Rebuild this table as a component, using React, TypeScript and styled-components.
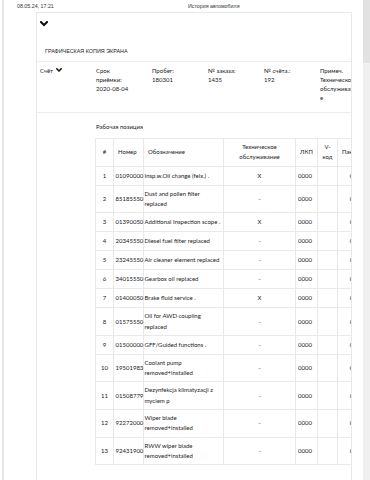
import React from 'react';
import styled, { createGlobalStyle } from 'styled-components';

const GlobalStyle = createGlobalStyle`
  html, body {
    margin: 0;
    padding: 0;
    background: #fff;
  }
  body {
    font-family: "Lato", "Open Sans", sans-serif;
    color: #222;
  }
`

const Page = styled.div`
  display: flex;
  width: 370px;
  height: 480px;
  overflow: hidden;
  padding-left: 2px;
  box-sizing: border-box;
`

const Frame = styled.div`
  flex: 1;
  min-width: 0;
  display: flex;
  flex-direction: column;
  border-left: 2px solid #e6e6e6;
`

// колонтитул печати
const PrintHeader = styled.div`
  display: grid;
  grid-template-columns: 171px auto;
  align-items: center;
  height: 12px;
  padding-left: 13px;
  font-family: "Liberation Sans", Arial, sans-serif;
  font-size: 5.3px;
  color: #333;
`

const Card = styled.div`
  flex: 1;
  width: 316px;
  margin-left: 32px;
  box-sizing: border-box;
  border: 1px solid #e8e8e8;
  border-bottom: none;
  overflow: hidden;
`

const Toggle = styled.div`
  display: flex;
  padding: 8px 0 0 3px;
  height: 5px;
`

const Title = styled.div`
  padding: 21px 0 6px 8px;
  line-height: 8px;
  font-family: "Liberation Sans", Arial, sans-serif;
  font-size: 5.4px;
  text-transform: uppercase;
  color: #222;
`

const InfoRow = styled.div`
  display: grid;
  grid-template-columns: repeat(5, 36px) 37.5px;
  column-gap: 20px;
  padding: 3.5px 3px 9px;
  border-top: 1px solid #ececec;
  border-bottom: 1px solid #ececec;
  font-size: 6px;
  line-height: 9.3px;
`

const InfoCell = styled.div`
  overflow-wrap: anywhere;
  white-space: normal;
`

const Label = styled.span`
  display: inline-flex;
  align-items: center;
  gap: 3px;
`

const WorkSection = styled.div`
  padding: 9px 0 8px 58px;
`

const SectionTitle = styled.div`
  padding-left: 1px;
  margin-bottom: 7px;
  font-size: 6px;
  line-height: 9px;
`

const Table = styled.table`
  width: 270px;
  table-layout: fixed;
  border-collapse: collapse;
  font-family: "Lato", sans-serif;
  font-size: 6px;
  color: #222;
`

const Col = styled.col<{ $w: number }>`
  width: ${p => p.$w}px;
`

const Th = styled.th<{ $align?: string }>`
  padding: 3.8px 4px;
  border: 1px solid #e9e9e9;
  font-weight: 400;
  line-height: 9.7px;
  text-align: ${p => p.$align || 'left'};
  vertical-align: middle;
  white-space: normal;
`

const Td = styled.td<{ $align?: string; $pad?: number }>`
  padding: 4px ${p => p.$pad ?? 1.5}px;
  border: 1px solid #e9e9e9;
  line-height: 10px;
  text-align: ${p => p.$align || 'left'};
  vertical-align: middle;
  white-space: nowrap;
`

const Name = styled(Td)`
  padding: 3px 0 3px 0.5px;
  line-height: 10.3px;
  overflow: hidden;
`

const ScrollTrack = styled.div`
  width: 7px;
  background: #f0f0f0;
  display: flex;
  flex-direction: column;
`

const ScrollThumb = styled.div`
  height: 63px;
  background: #e2e2e2;
`

const Chevron = ({ w, h }: { w: number, h: number }) => (
  <svg width={w} height={h} viewBox="0 0 8 5.5">
    <path d="M1 1 L4 4 L7 1" fill="none" stroke="#111" strokeWidth="2" strokeLinecap="square" />
  </svg>
)

interface IRow {
  code: string,
  name: string[],
  service: string
}

const rows: IRow[] = [
  { code: '01090000', name: ['Insp.w.Oil change (felx.) .'], service: 'X' },
  { code: '85185550', name: ['Dust and pollen filter', 'replaced'], service: '-' },
  { code: '01390050', name: ['Additional Inspection scope .'], service: 'X' },
  { code: '20345550', name: ['Diesel fuel filter replaced'], service: '-' },
  { code: '23245550', name: ['Air cleaner element replaced'], service: '-' },
  { code: '34015550', name: ['Gearbox oil replaced'], service: '-' },
  { code: '01400050', name: ['Brake fluid service .'], service: 'X' },
  { code: '01575550', name: ['Oil for AWD coupling', 'replaced'], service: '-' },
  { code: '01500000', name: ['GFF/Guided functions .'], service: '-' },
  { code: '19501983', name: ['Coolant pump', 'removed+installed'], service: '-' },
  { code: '01508779', name: ['Dezynfekcja klimatyzacji z', 'myciem p'], service: '-' },
  { code: '92272000', name: ['Wiper blade', 'removed+installed'], service: '-' },
  { code: '92431900', name: ['RWW wiper blade', 'removed+installed'], service: '-' },
]

const info = [
  'Срок приёмки: 2020-08-04',
  'Пробег: 180301',
  '№ заказа: 1435',
  '№ счёта.: 192',
  'Примеч. Техническое обслуживание',
]

export default function App() {
  return (
    <>
      <GlobalStyle />
      <Page>
        <Frame>
          <PrintHeader>
            <span>08.05.24, 17:21</span>
            <span>История автомобиля</span>
          </PrintHeader>
          <Card>
            <Toggle>
              <Chevron w={8} h={5.5} />
            </Toggle>
            <Title>Графическая копия экрана</Title>
            <InfoRow>
              <InfoCell>
                <Label>Счёт <Chevron w={6} h={4} /></Label>
              </InfoCell>
              {info.map(t => <InfoCell key={t}>{t}</InfoCell>)}
            </InfoRow>
            <WorkSection>
              <SectionTitle>Рабочая позиция</SectionTitle>
              <Table>
                <colgroup>
                  <Col $w={18} />
                  <Col $w={30} />
                  <Col $w={80} />
                  <Col $w={72} />
                  <Col $w={22} />
                  <Col $w={20} />
                  <Col $w={28} />
                </colgroup>
                <thead>
                  <tr>
                    <Th $align="center">#</Th>
                    <Th>Номер</Th>
                    <Th>Обозначение</Th>
                    <Th $align="center">Техническое обслуживание</Th>
                    <Th $align="center">ЛКП</Th>
                    <Th $align="center">V-код</Th>
                    <Th>Пакет</Th>
                  </tr>
                </thead>
                <tbody>
                  {rows.map((r, i) => (
                    <tr key={r.code}>
                      <Td $align="center">{i + 1}</Td>
                      <Td>{r.code}</Td>
                      <Name>
                        {r.name.map((line, j) => (
                          <React.Fragment key={j}>{j > 0 && <br />}{line}</React.Fragment>
                        ))}
                      </Name>
                      <Td $align="center">{r.service}</Td>
                      <Td $pad={2}>0000</Td>
                      <Td />
                      <Td $align="center">0</Td>
                    </tr>
                  ))}
                </tbody>
              </Table>
            </WorkSection>
          </Card>
        </Frame>
        <ScrollTrack>
          <ScrollThumb />
        </ScrollTrack>
      </Page>
    </>
  )
}
